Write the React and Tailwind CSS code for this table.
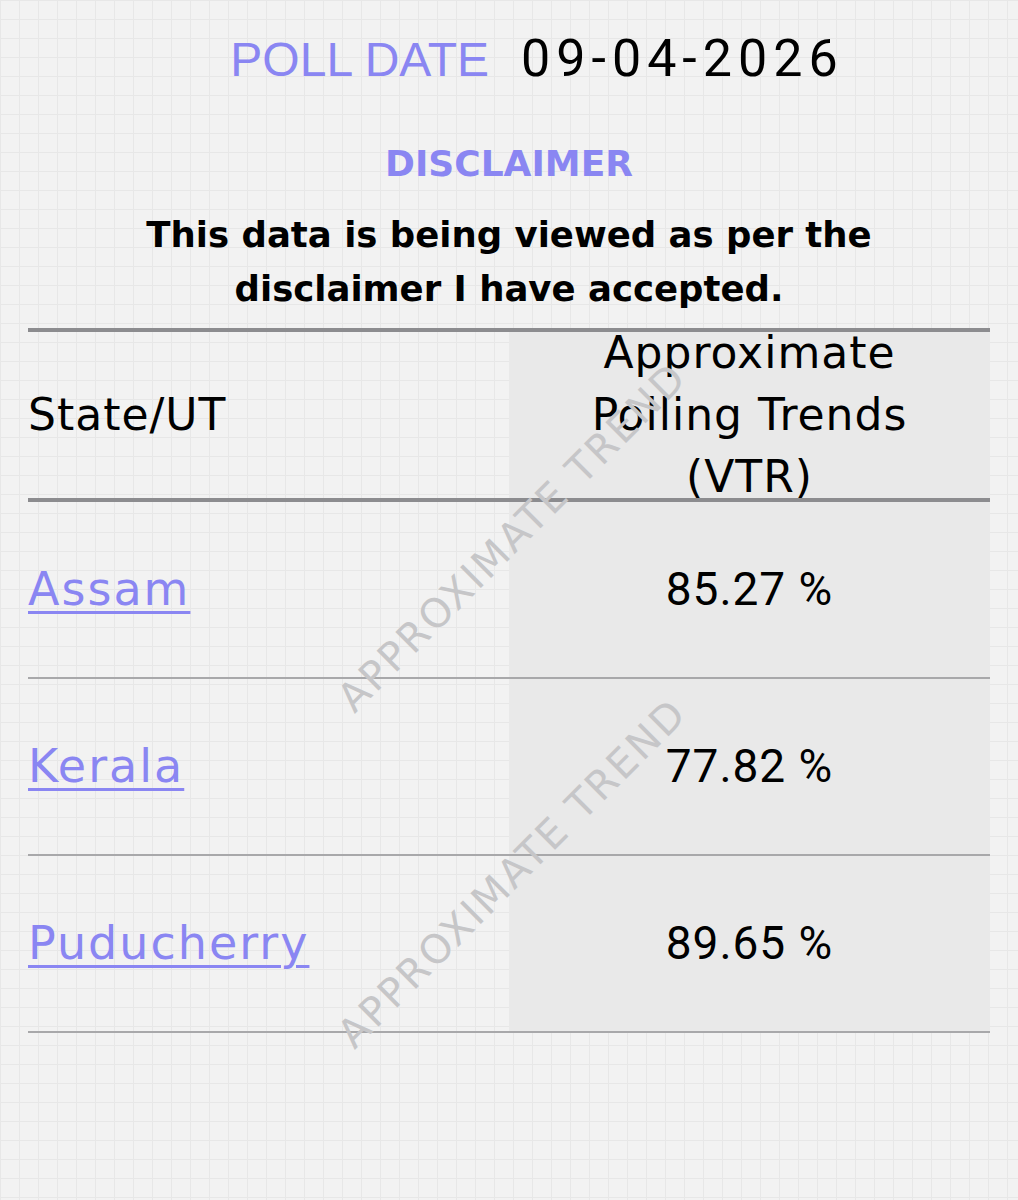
const rows = [
  { name: "Assam", value: "85.27 %" },
  { name: "Kerala", value: "77.82 %" },
  { name: "Puducherry", value: "89.65 %" },
];

const Watermark = ({ className }) => (
  <div
    className={`pointer-events-none absolute left-[512px] z-20 -translate-x-1/2 -translate-y-1/2 -rotate-45 whitespace-nowrap text-[40px] tracking-[2.5px] text-[#c6c6c8] font-['DejaVu_Sans',sans-serif] ${className}`}
  >
    APPROXIMATE TREND
  </div>
);

export default function App() {
  return (
    <div className="relative min-h-[1200px] w-full overflow-hidden bg-[#f2f2f2] bg-[linear-gradient(to_right,#e7e7e7_1px,transparent_1px),linear-gradient(to_bottom,#e7e7e7_1px,transparent_1px)] bg-[size:19px_19px] font-['DejaVu_Sans',sans-serif]">
      {/* Poll date */}
      <div className="flex h-[92px] items-baseline justify-center gap-8 pl-[56px] pt-[33px]">
        <span className="text-[48px] leading-none text-[#8a86f2] font-['Liberation_Sans',sans-serif]">
          POLL DATE
        </span>
        <span className="text-[52px] leading-none tracking-[6px] text-black font-['Roboto',sans-serif]">
          09-04-2026
        </span>
      </div>

      {/* Disclaimer */}
      <div className="mt-[50px] text-center">
        <h2 className="text-[36px] font-bold leading-[44px] text-[#8a86f2]">
          DISCLAIMER
        </h2>
        <p className="mt-[22px] text-[35.5px] font-bold leading-[54px] text-black">
          This data is being viewed as per the
          <br />
          disclaimer I have accepted.
        </p>
      </div>

      {/* Table */}
      <div className="mx-[28px] mt-[12px]">
        <div className="grid h-[174px] grid-cols-2 grid-rows-1 border-y-4 border-[#8c8c8f]">
          <div className="flex items-center text-[44px] tracking-[1px] text-black">
            State/UT
          </div>
          <div className="flex items-center justify-center bg-[#e9e9e9] text-center text-[44px] leading-[62px] tracking-[1px] text-black">
            <span className="relative z-10">
              Approximate
              <br />
              Polling Trends
              <br />
              (VTR)
            </span>
          </div>
        </div>
        {rows.map((row) => (
          <div
            key={row.name}
            className="grid h-[177px] grid-cols-2 grid-rows-1 border-b-2 border-[#a8a8aa]"
          >
            <div className="flex items-center">
              <a
                href="#"
                className="text-[46px] tracking-[2px] text-[#8a86f2] underline decoration-[3px] underline-offset-[6px]"
              >
                {row.name}
              </a>
            </div>
            <div className="flex items-center justify-center bg-[#e9e9e9] text-[46px] tracking-[1px] text-black font-['Roboto',sans-serif]">
              {row.value}
            </div>
          </div>
        ))}
      </div>

      <Watermark className="top-[537px]" />
      <Watermark className="top-[873px]" />
    </div>
  );
}
